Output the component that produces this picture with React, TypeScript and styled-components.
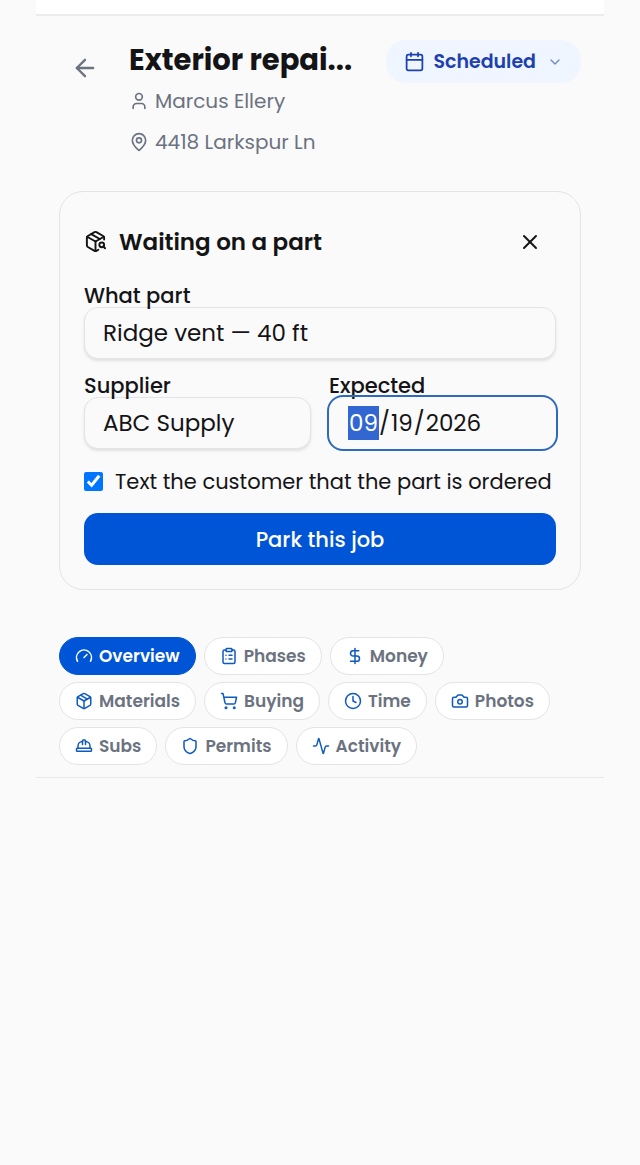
import { useState } from "react";
import type { ReactNode } from "react";
import styled, { createGlobalStyle } from "styled-components";
import {
	Activity,
	ArrowLeft,
	Calendar,
	Camera,
	ChevronDown,
	ClipboardList,
	Clock,
	DollarSign,
	Gauge,
	HardHat,
	MapPin,
	Package,
	PackageSearch,
	Shield,
	ShoppingCart,
	User,
	X,
} from "lucide-react";
import type { LucideIcon } from "lucide-react";

const GlobalStyle = createGlobalStyle`
	*, *::before, *::after {
		box-sizing: border-box;
	}

	body {
		margin: 0;
		background: #fafafa;
		color: #141416;
		font-family: Poppins, Inter, "Open Sans", sans-serif;
	}

	button, input {
		font-family: inherit;
		color: inherit;
	}
`;

const Page = styled.div`
	margin: 0 36px;
`;

const TopBar = styled.div`
	height: 16px;
	background: #ffffff;
	border-bottom: 2px solid #ececee;
`;

const Header = styled.header`
	display: flex;
	align-items: flex-start;
	padding: 24px 23px 0;
`;

const IconButton = styled.button`
	display: flex;
	align-items: center;
	justify-content: center;
	width: 52px;
	height: 51px;
	padding: 0;
	border: 0;
	border-radius: 14px;
	background: transparent;
	cursor: pointer;
`;

const BackButton = styled(IconButton)`
	height: 56px;
	color: #6b7280;
`;

const JobInfo = styled.div`
	flex: 1;
	min-width: 0;
	margin-left: 18px;
`;

const JobTitle = styled.h1`
	margin: 0;
	font-size: 29px;
	font-weight: 700;
	line-height: 40px;
	white-space: nowrap;
`;

const Detail = styled.div`
	display: flex;
	align-items: center;
	gap: 6px;
	height: 41px;
	color: #6b7280;
	font-size: 20px;
`;

const StatusButton = styled.button`
	display: flex;
	align-items: center;
	height: 43px;
	padding: 0 18px;
	border: 0;
	border-radius: 20px;
	background: #eff6ff;
	color: #1e40af;
	font-size: 19px;
	font-weight: 600;
	line-height: 24px;
	cursor: pointer;

	span {
		margin: 0 11px 0 8px;
	}
`;

const Card = styled.form`
	margin: 29px 23px 0;
	padding: 24px;
	border: 1px solid #e4e4e7;
	border-radius: 24px;
	display: grid;
	gap: 15px;
`;

const CardHeader = styled.div`
	display: flex;
	align-items: center;
	gap: 12px;
	padding-bottom: 2px;
`;

const CardTitle = styled.h2`
	flex: 1;
	margin: 0;
	font-size: 23px;
	font-weight: 600;
`;

const FieldRow = styled.div`
	display: grid;
	grid-template-columns: 1fr 1fr;
	gap: 18px;
`;

const Field = styled.label`
	display: block;
	min-width: 0;
	font-size: 21px;
	font-weight: 500;
	line-height: 23px;
`;

const Input = styled.input`
	display: block;
	width: 100%;
	height: 52px;
	padding: 0 18px;
	border: 1px solid #e4e4e7;
	border-radius: 14px;
	background: #fafafa;
	box-shadow: 0 2px 3px rgba(0, 0, 0, 0.1);
	font-size: 23px;
	font-weight: 400;

	&:focus {
		outline: 2px solid #2f6bbd;
		outline-offset: 0;
		border-color: transparent;
		box-shadow: none;
	}

	&::-webkit-calendar-picker-indicator {
		display: none;
	}

	&::-webkit-datetime-edit-month-field:focus {
		background: #3367d1;
		color: #ffffff;
	}
`;

const CheckLabel = styled.label`
	display: flex;
	align-items: center;
	gap: 12px;
	height: 34px;
	font-size: 21px;
	white-space: nowrap;

	input {
		width: 19px;
		height: 19px;
		margin: 0;
		accent-color: #0075ff;
	}
`;

const SubmitButton = styled.button`
	height: 52px;
	border: 0;
	border-radius: 14px;
	background: #0055d6;
	color: #ffffff;
	font-size: 21px;
	font-weight: 500;
	cursor: pointer;
`;

const Tabs = styled.nav`
	display: flex;
	flex-wrap: wrap;
	gap: 7px 8px;
	margin-top: 47px;
	padding: 0 23px 12px;
	border-bottom: 1px solid #e8e8ea;
`;

const Tab = styled.button<{ $active: boolean }>`
	display: flex;
	align-items: center;
	gap: 6px;
	height: 38px;
	padding: 0 15px;
	border: 1px solid ${({ $active }) => ($active ? "#0055d6" : "#e4e4e7")};
	border-radius: 19px;
	background: ${({ $active }) => ($active ? "#0055d6" : "#ffffff")};
	color: ${({ $active }) => ($active ? "#ffffff" : "#6b7280")};
	font-size: 17px;
	font-weight: 600;
	cursor: pointer;

	svg {
		color: ${({ $active }) => ($active ? "#ffffff" : "#0f5abf")};
	}
`;

const tabs: { name: string; icon: LucideIcon }[] = [
	{ name: "Overview", icon: Gauge },
	{ name: "Phases", icon: ClipboardList },
	{ name: "Money", icon: DollarSign },
	{ name: "Materials", icon: Package },
	{ name: "Buying", icon: ShoppingCart },
	{ name: "Time", icon: Clock },
	{ name: "Photos", icon: Camera },
	{ name: "Subs", icon: HardHat },
	{ name: "Permits", icon: Shield },
	{ name: "Activity", icon: Activity },
];

interface TextFieldProps {
	label: string;
	value: string;
	type?: string;
	autoFocus?: boolean;
}

const TextField = ({ label, value, type = "text", autoFocus }: TextFieldProps) => (
	<Field>
		{label}
		<Input type={type} defaultValue={value} autoFocus={autoFocus} />
	</Field>
);

const DetailLine = ({ icon: Icon, children }: { icon: LucideIcon; children: ReactNode }) => (
	<Detail>
		<Icon size={20} strokeWidth={2} />
		{children}
	</Detail>
);

const App = () => {
	const [active, setActive] = useState("Overview");
	const [notify, setNotify] = useState(true);

	return (
		<>
			<GlobalStyle />
			<Page>
				<TopBar />
				<Header>
					<BackButton type="button" aria-label="Back">
						<ArrowLeft size={28} strokeWidth={2} />
					</BackButton>
					<JobInfo>
						<JobTitle>Exterior repai...</JobTitle>
						<DetailLine icon={User}>Marcus Ellery</DetailLine>
						<DetailLine icon={MapPin}>4418 Larkspur Ln</DetailLine>
					</JobInfo>
					<StatusButton type="button">
						<Calendar size={21} strokeWidth={2} />
						<span>Scheduled</span>
						<ChevronDown size={16} strokeWidth={2} opacity={0.6} />
					</StatusButton>
				</Header>

				<Card onSubmit={(e) => e.preventDefault()}>
					<CardHeader>
						<PackageSearch size={23} strokeWidth={2} />
						<CardTitle>Waiting on a part</CardTitle>
						<IconButton type="button" aria-label="Close">
							<X size={24} strokeWidth={2} />
						</IconButton>
					</CardHeader>
					<TextField label="What part" value="Ridge vent — 40 ft" />
					<FieldRow>
						<TextField label="Supplier" value="ABC Supply" />
						<TextField label="Expected" value="2026-09-19" type="date" autoFocus />
					</FieldRow>
					<CheckLabel>
						<input type="checkbox" checked={notify} onChange={(e) => setNotify(e.target.checked)} />
						Text the customer that the part is ordered
					</CheckLabel>
					<SubmitButton type="submit">Park this job</SubmitButton>
				</Card>

				<Tabs>
					{tabs.map(({ name, icon: Icon }) => (
						<Tab key={name} type="button" $active={active === name} onClick={() => setActive(name)}>
							<Icon size={18} strokeWidth={2} />
							{name}
						</Tab>
					))}
				</Tabs>
			</Page>
		</>
	);
};

export default App;
